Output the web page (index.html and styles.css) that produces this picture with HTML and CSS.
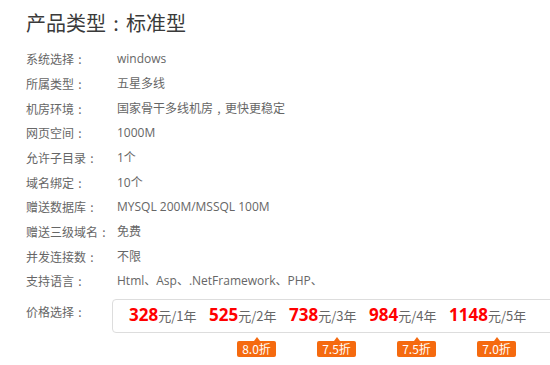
FILE: index.html
```html
<!DOCTYPE html>
<html lang="zh">
<head>
<meta charset="utf-8">
<link rel="stylesheet" href="styles.css">
</head>
<body>
<div class="page">
  <h1 class="title">产品类型<span class="colon">:</span>标准型</h1>
  <dl class="specs">
    <dt>系统选择<span class="colon">:</span></dt><dd>windows</dd>
    <dt>所属类型<span class="colon">:</span></dt><dd>五星多线</dd>
    <dt>机房环境<span class="colon">:</span></dt><dd>国家骨干多线机房<span class="comma">,</span>更快更稳定</dd>
    <dt>网页空间<span class="colon">:</span></dt><dd>1000M</dd>
    <dt>允许子目录<span class="colon">:</span></dt><dd>1个</dd>
    <dt>域名绑定<span class="colon">:</span></dt><dd>10个</dd>
    <dt>赠送数据库<span class="colon">:</span></dt><dd>MYSQL 200M/MSSQL 100M</dd>
    <dt>赠送三级域名<span class="colon">:</span></dt><dd>免费</dd>
    <dt>并发连接数<span class="colon">:</span></dt><dd>不限</dd>
    <dt>支持语言<span class="colon">:</span></dt><dd>Html、Asp、.NetFramework、PHP、</dd>
  </dl>
  <div class="price-row">
    <div class="price-label">价格选择<span class="colon">:</span></div>
    <ul class="price-box">
      <li class="price"><b>328</b>元/1年</li>
      <li class="price"><b>525</b>元/2年<span class="badge">8.0折</span></li>
      <li class="price"><b>738</b>元/3年<span class="badge">7.5折</span></li>
      <li class="price"><b>984</b>元/4年<span class="badge">7.5折</span></li>
      <li class="price"><b>1148</b>元/5年<span class="badge">7.0折</span></li>
    </ul>
  </div>
</div>
</body>
</html>
```

FILE: styles.css
```css
* { box-sizing: border-box; }
html, body {
  margin: 0;
  padding: 0;
  background: #fff;
  width: 550px;
  height: 365px;
  overflow: hidden;
}
body {
  font-family: "Open Sans", "Noto Sans CJK SC", sans-serif;
  color: #666;
  font-size: 12px;
}
.page {
  padding: 10px 0 0 26px;
}
.colon, .comma {
  display: inline-block;
  width: 1em;
  text-align: center;
  font-family: "Noto Sans CJK SC", sans-serif;
}
.title {
  margin: 0;
  font-family: "Noto Sans CJK SC", sans-serif;
  font-weight: 400;
  font-size: 20px;
  line-height: 25px;
  color: #3a3a3a;
}
.specs {
  margin: 12px 0 0;
  display: grid;
  grid-template-columns: 91px 1fr;
  grid-auto-rows: 24.67px;
  align-items: center;
}
.specs dt, .specs dd {
  margin: 0;
  line-height: 18px;
}
.specs dt {
  font-family: "Noto Sans CJK SC", sans-serif;
}
.price-row {
  display: flex;
  align-items: flex-start;
  margin-top: 5px;
}
.price-label {
  width: 86px;
  flex: none;
  font-family: "Noto Sans CJK SC", sans-serif;
  line-height: 18px;
  margin-top: 4px;
}
.price-box {
  margin: 0;
  list-style: none;
  display: flex;
  flex: none;
  height: 34px;
  width: 460px;
  border: 1px solid #ddd;
  border-radius: 4px;
  padding: 0 0 0 16px;
  align-items: center;
}
.price {
  position: relative;
  width: 80px;
  flex: none;
  font-size: 13px;
  color: #666;
  white-space: nowrap;
  font-family: "Noto Sans CJK SC", sans-serif;
  line-height: 20px;
}
.price b {
  font-family: "Open Sans", sans-serif;
  font-weight: 700;
  font-size: 17px;
  color: #f00;
}
.badge {
  position: absolute;
  left: 28px;
  top: 36px;
  width: 39px;
  height: 16px;
  background: #f56a0f;
  color: #fff;
  font-size: 12px;
  line-height: 16px;
  text-align: center;
  border-radius: 2px;
}
.badge::before {
  content: "";
  position: absolute;
  left: 17px;
  top: -4px;
  border-left: 3px solid transparent;
  border-right: 3px solid transparent;
  border-bottom: 4px solid #f56a0f;
}
```
